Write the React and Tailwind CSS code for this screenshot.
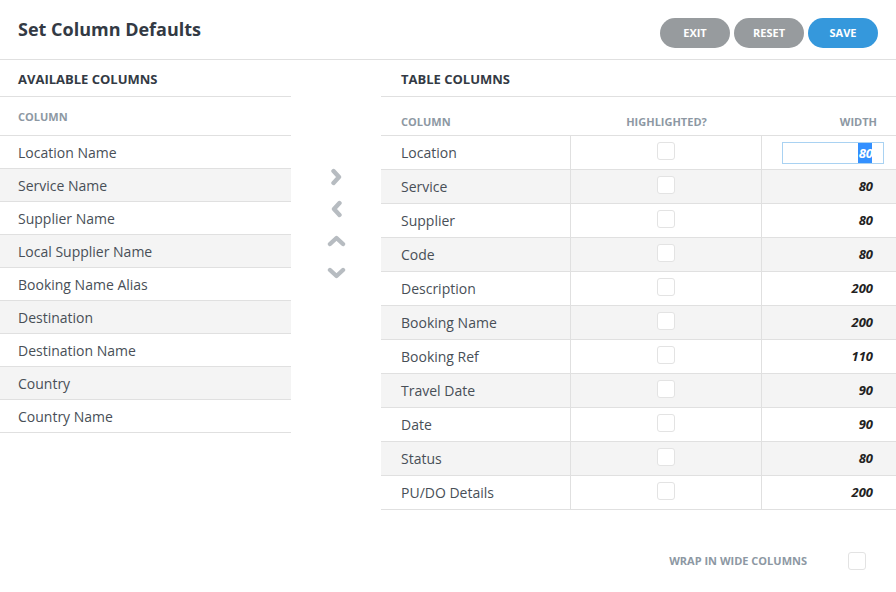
import { useState } from 'react'

const MEVCUT = [
  'Location Name',
  'Service Name',
  'Supplier Name',
  'Local Supplier Name',
  'Booking Name Alias',
  'Destination',
  'Destination Name',
  'Country',
  'Country Name',
]

const TABLO = [
  { ad: 'Location', genislik: 80 },
  { ad: 'Service', genislik: 80 },
  { ad: 'Supplier', genislik: 80 },
  { ad: 'Code', genislik: 80 },
  { ad: 'Description', genislik: 200 },
  { ad: 'Booking Name', genislik: 200 },
  { ad: 'Booking Ref', genislik: 110 },
  { ad: 'Travel Date', genislik: 90 },
  { ad: 'Date', genislik: 90 },
  { ad: 'Status', genislik: 80 },
  { ad: 'PU/DO Details', genislik: 200 },
]

function Kutu() {
  return <div className="w-[18px] h-[18px] rounded-[3px] border border-[#e3e3e3] bg-white" />
}

function Ok({ yon }) {
  const d = {
    sag: 'M6.5 3 L12 9 L6.5 15',
    sol: 'M12.5 3 L7 9 L12.5 15',
    yukari: 'M3 12 L9.5 6 L16 12',
    asagi: 'M3 6 L9.5 12 L16 6',
  }[yon]
  return (
    <svg width="19" height="18" viewBox="0 0 19 18" className="block">
      <path d={d} fill="none" stroke="#b7bcc1" strokeWidth="4.4" strokeLinecap="round" strokeLinejoin="round" />
    </svg>
  )
}

export default function App() {
  const [genislik, setGenislik] = useState('80')

  return (
    <div className="w-[896px] h-[592px] bg-white text-[#484f57] font-['Open_Sans',sans-serif] overflow-hidden">
      {/* Başlık */}
      <div className="h-[60px] flex items-start justify-between border-b border-[#e0e0e0] pl-[18px] pr-[18px]">
        <h1 className="mt-[16px] text-[18px] font-bold text-[#333a44]">Set Column Defaults</h1>
        <div className="flex gap-[4px] mt-[18px]">
          <button className="w-[70px] h-[30px] rounded-full bg-[#979b9e] text-white text-[11px] font-bold">EXIT</button>
          <button className="w-[70px] h-[30px] rounded-full bg-[#979b9e] text-white text-[11px] font-bold">RESET</button>
          <button className="w-[70px] h-[30px] rounded-full bg-[#3598dc] text-white text-[11px] font-bold">SAVE</button>
        </div>
      </div>

      <div className="flex">
        {/* Mevcut kolonlar */}
        <div className="w-[291px]">
          <div className="h-[37px] flex items-center pl-[18px] border-b border-[#e0e0e0] text-[13px] font-bold text-[#333a44] pt-[4px]">
            AVAILABLE COLUMNS
          </div>
          <div className="h-[39px] flex items-center pl-[18px] border-b border-[#e0e0e0] text-[11px] font-bold text-[#8d98a3] pt-[2px]">
            COLUMN
          </div>
          {MEVCUT.map((m, i) => (
            <div
              key={m}
              className={`h-[33px] flex items-center pl-[18px] border-b border-[#e0e0e0] text-[14px] ${i % 2 === 1 ? 'bg-[#f4f4f4]' : ''}`}
            >
              {m}
            </div>
          ))}
        </div>

        {/* Oklar */}
        <div className="w-[90px] flex flex-col items-center pt-[108px] gap-[14px] pl-[1px]">
          <Ok yon="sag" />
          <Ok yon="sol" />
          <Ok yon="yukari" />
          <Ok yon="asagi" />
        </div>

        {/* Tablo kolonları */}
        <div className="flex-1">
          <div className="h-[37px] flex items-center pl-[20px] border-b border-[#e0e0e0] text-[13px] font-bold text-[#333a44] pt-[4px]">
            TABLE COLUMNS
          </div>
          <div className="h-[39px] flex items-end pb-[5px] border-b border-[#e0e0e0] text-[11px] font-bold text-[#8d98a3]">
            <div className="w-[190px] pl-[20px]">COLUMN</div>
            <div className="w-[191px] text-center">HIGHLIGHTED?</div>
            <div className="flex-1 text-right pr-[19px]">WIDTH</div>
          </div>
          {TABLO.map((t, i) => (
            <div
              key={t.ad}
              className={`h-[34px] flex border-b border-[#e0e0e0] ${i % 2 === 1 ? 'bg-[#f4f4f4]' : ''}`}
            >
              <div className="w-[190px] pl-[20px] flex items-center text-[14px] border-r border-[#e0e0e0]">{t.ad}</div>
              <div className="w-[191px] flex items-center justify-center border-r border-[#e0e0e0] pb-[4px]">
                <Kutu />
              </div>
              <div className="flex-1 flex items-center justify-end">
                {i === 0 ? (
                  <input
                    value={genislik}
                    onChange={e => setGenislik(e.target.value)}
                    className="w-[102px] h-[22px] mr-[12px] border border-[#a9d2f2] bg-white text-right pr-[10px] text-[13px] font-bold italic text-white outline-none"
                    style={{ background: 'linear-gradient(to left, white 11px, #3390ff 11px, #3390ff 25px, white 25px)' }}
                  />
                ) : (
                  <span className="pr-[23px] text-[13px] font-bold italic text-[#222]">{t.genislik}</span>
                )}
              </div>
            </div>
          ))}
          <div className="flex items-center justify-end mt-[42px] pr-[30px]">
            <span className="text-[11px] font-bold text-[#8d98a3] mr-[41px]">WRAP IN WIDE COLUMNS</span>
            <Kutu />
          </div>
        </div>
      </div>
    </div>
  )
}
